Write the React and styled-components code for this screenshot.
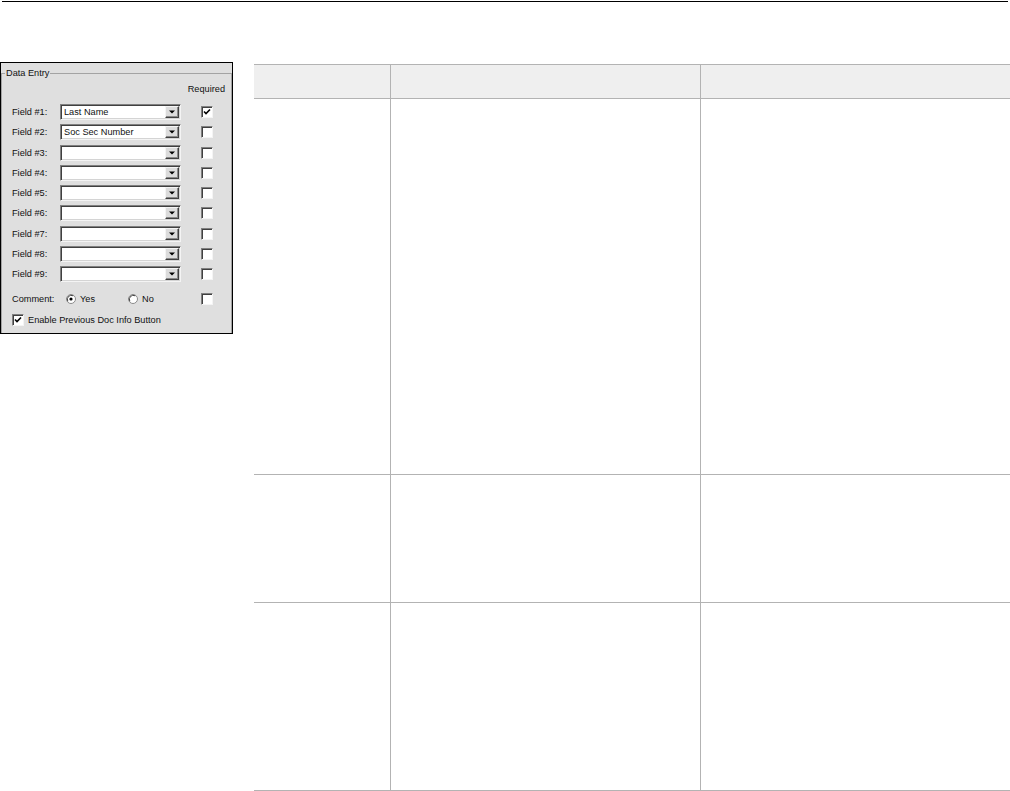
import React from 'react'
import styled, { createGlobalStyle } from 'styled-components'

const GlobalStyle = createGlobalStyle`
  html, body {
    margin: 0;
    padding: 0;
    background: #fff;
  }
  body {
    font-family: "Liberation Sans", Arial, sans-serif;
    color: #000;
  }
`

const fields = [
  { label: 'Field #1:', value: 'Last Name', required: true },
  { label: 'Field #2:', value: 'Soc Sec Number', required: false },
  { label: 'Field #3:', value: '', required: false },
  { label: 'Field #4:', value: '', required: false },
  { label: 'Field #5:', value: '', required: false },
  { label: 'Field #6:', value: '', required: false },
  { label: 'Field #7:', value: '', required: false },
  { label: 'Field #8:', value: '', required: false },
  { label: 'Field #9:', value: '', required: false },
]

const tableRows = ['head', 'a', 'b', 'c']

function CheckBox({ checked, ml }) {
  return (
    <Check $ml={ml}>
      {checked ? (
        <svg width="8" height="8" viewBox="0 0 8 8">
          <path d="M1 3.5 L3 5.5 L7 1.5" fill="none" stroke="#000" strokeWidth="1.6" />
        </svg>
      ) : null}
    </Check>
  )
}

function Radio({ checked }) {
  return (
    <svg width="10" height="10" viewBox="0 0 10 10">
      <circle cx="5" cy="5" r="4.5" fill="#fff" stroke="#8a8a8a" />
      <path d="M1.8 7.2 A4 4 0 0 1 7.2 1.8" fill="none" stroke="#404040" strokeWidth="1" />
      {checked ? <circle cx="5" cy="5" r="1.6" fill="#000" /> : null}
    </svg>
  )
}

function Combo({ value }) {
  return (
    <Select>
      <SelectText>{value}</SelectText>
      <ArrowButton>
        <svg width="6" height="4" viewBox="0 0 6 4">
          <path d="M0 0.5 H6 L3 3.5 Z" fill="#000" />
        </svg>
      </ArrowButton>
    </Select>
  )
}

export default function App() {
  return (
    <Page>
      <GlobalStyle />
      <TopRule />
      <Body>
        <Panel>
          <Group>
            <Legend>Data Entry</Legend>
            <RequiredRow>Required</RequiredRow>
            <FieldList>
              {fields.map(f => (
                <Row key={f.label}>
                  <Label $w={48}>{f.label}</Label>
                  <Combo value={f.value} />
                  <CheckBox checked={f.required} ml={20} />
                </Row>
              ))}
            </FieldList>
            <CommentRow>
              <Label $w={54}>Comment:</Label>
              <Options>
                <RadioOption $w={62}>
                  <Radio checked />
                  <span>Yes</span>
                </RadioOption>
                <RadioOption $w={53}>
                  <Radio />
                  <span>No</span>
                </RadioOption>
              </Options>
              <CheckBox ml={20} />
            </CommentRow>
            <EnableRow>
              <CheckBox checked ml={0} />
              <EnableText>Enable Previous Doc Info Button</EnableText>
            </EnableRow>
          </Group>
        </Panel>
        <Table>
          {tableRows.map(r => (
            <React.Fragment key={r}>
              <Cell $head={r === 'head'} $first />
              <Cell $head={r === 'head'} />
              <Cell $head={r === 'head'} />
            </React.Fragment>
          ))}
        </Table>
      </Body>
    </Page>
  )
}

const Page = styled.div`
  width: 1010px;
  height: 791px;
  overflow: hidden;
`

const TopRule = styled.div`
  height: 1px;
  background: #000;
  margin: 1px 2px 0;
`

const Body = styled.div`
  display: flex;
  align-items: flex-start;
  padding-top: 60px;
`

const Panel = styled.div`
  box-sizing: border-box;
  flex-shrink: 0;
  width: 233px;
  height: 272px;
  border: 1px solid #000;
  background: #dfdfdf;
  font-size: 9.2px;
  color: #111;
`

const Group = styled.fieldset`
  box-sizing: border-box;
  height: calc(100% - 4px);
  min-width: 0;
  margin: 4px 0 0 0;
  padding: 0;
  border: 1px solid #a3a3a3;
  border-bottom: none;
`

const Legend = styled.legend`
  margin-left: 3px;
  padding: 0 1px;
  font-size: 9.2px;
  line-height: 12px;
`

const RequiredRow = styled.div`
  display: flex;
  justify-content: flex-end;
  align-items: center;
  height: 19px;
  padding-right: 6px;
`

const FieldList = styled.div`
  margin-top: 4px;
`

const Row = styled.div`
  display: flex;
  align-items: center;
  height: 20.25px;
  padding-left: 10px;
`

const CommentRow = styled(Row)`
  height: 18px;
  margin-top: 6px;
`

const EnableRow = styled(Row)`
  height: 23px;
`

const Label = styled.span`
  flex-shrink: 0;
  width: ${p => p.$w}px;
  white-space: nowrap;
`

const Select = styled.div`
  box-sizing: border-box;
  display: flex;
  align-items: center;
  flex-shrink: 0;
  width: 121px;
  height: 16px;
  padding: 1px;
  background: #fff;
  border: 1px solid;
  border-color: #808080 #f4f4f4 #f4f4f4 #808080;
  box-shadow: inset 1px 1px 0 #404040, inset -1px -1px 0 #d4d4d4;
`

const SelectText = styled.span`
  flex: 1;
  padding-left: 2px;
  white-space: nowrap;
`

const ArrowButton = styled.span`
  box-sizing: border-box;
  display: flex;
  align-items: center;
  justify-content: center;
  width: 14px;
  height: 12px;
  background: #dcdcdc;
  border: 1px solid;
  border-color: #f4f4f4 #404040 #404040 #f4f4f4;
  box-shadow: inset -1px -1px 0 #8a8a8a;
`

const Check = styled.span`
  box-sizing: border-box;
  display: inline-flex;
  align-items: center;
  justify-content: center;
  flex-shrink: 0;
  width: 12px;
  height: 12px;
  margin-left: ${p => p.$ml}px;
  background: #fff;
  border: 1px solid;
  border-color: #808080 #f4f4f4 #f4f4f4 #808080;
  box-shadow: inset 1px 1px 0 #404040;
`

const Options = styled.div`
  display: flex;
  align-items: center;
  width: 115px;
`

const RadioOption = styled.span`
  display: flex;
  align-items: center;
  gap: 4px;
  width: ${p => p.$w}px;
`

const EnableText = styled.span`
  margin-left: 4px;
  white-space: nowrap;
`

const Table = styled.div`
  display: grid;
  grid-template-columns: 136px 310px 310px;
  grid-template-rows: 34px 376px 128px 188px;
  flex-shrink: 0;
  width: 756px;
  margin: 2px 0 0 21px;
  border-top: 1px solid #b3b3b3;
`

const Cell = styled.div`
  box-sizing: border-box;
  border-bottom: 1px solid #b3b3b3;
  border-left: ${p => (p.$first ? 'none' : '1px solid #b3b3b3')};
  background: ${p => (p.$head ? '#efefef' : '#fff')};
`
